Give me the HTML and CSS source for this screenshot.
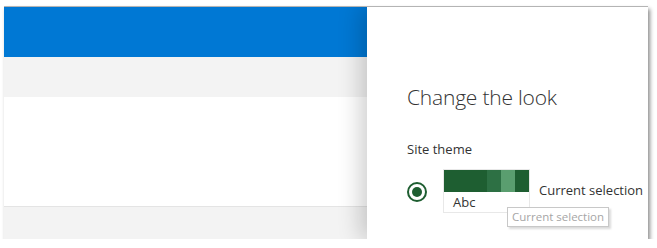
FILE: index.html
```html
<!DOCTYPE html>
<html lang="en">
<head>
    <meta charset="UTF-8">
    <title>Change the look</title>
    <link rel="stylesheet" href="styles.css">
</head>
<body>
    <div class="frame">
        <div class="site">
            <div class="suite-bar"></div>
            <div class="command-bar"></div>
            <div class="content"></div>
            <div class="footer"></div>
        </div>
        <div class="panel">
            <h1 class="panel-title">Change the look</h1>
            <div class="section-label">Site theme</div>
            <div class="theme-row">
                <span class="radio"><span class="radio-dot"></span></span>
                <div class="theme-card">
                    <div class="swatch">
                        <span class="c1"></span>
                        <span class="c2"></span>
                        <span class="c3"></span>
                        <span class="c4"></span>
                    </div>
                    <div class="sample">Abc</div>
                </div>
                <span class="theme-name">Current selection</span>
                <span class="tooltip">Current selection</span>
            </div>
        </div>
    </div>
</body>
</html>
```

FILE: styles.css
```css
body {
    margin: 0;
    background-color: #fff;
    font-family: "Open Sans", "Noto Sans", sans-serif;
    color: #333;
}
.frame {
    position: relative;
    width: 644px;
    height: 232px;
    margin: 6px 0 0 4px;
    border-top: 1px solid #b4b4b4;
    box-shadow: 2px 3px 4px rgba(0, 0, 0, 0.45);
    overflow: hidden;
}
.site {
    display: flex;
    flex-direction: column;
    height: 100%;
}
.suite-bar {
    height: 50px;
    background-color: #0078d4;
}
.command-bar {
    height: 40px;
    background-color: #f3f3f3;
}
.content {
    flex: 1;
    background-color: #fff;
    border-bottom: 1px solid #e4e4e4;
}
.footer {
    height: 32px;
    background-color: #f3f3f3;
}
.panel {
    position: absolute;
    top: 0;
    right: 0;
    bottom: 0;
    width: 281px;
    padding: 0 0 0 40px;
    box-sizing: border-box;
    background-color: #fff;
    box-shadow: -6px 0 22px rgba(0, 0, 0, 0.2);
}
.panel-title {
    margin: 76px 0 0;
    font-size: 21px;
    font-weight: 300;
    color: #333;
    letter-spacing: -0.2px;
}
.section-label {
    margin-top: 29px;
    font-size: 13px;
}
.theme-row {
    position: relative;
    display: flex;
    align-items: flex-start;
    margin-top: 11px;
}
.radio {
    display: flex;
    justify-content: center;
    align-items: center;
    width: 16px;
    height: 16px;
    margin-top: 13px;
    border: 2px solid #1e5e31;
    border-radius: 50%;
}
.radio-dot {
    width: 10px;
    height: 10px;
    border-radius: 50%;
    background-color: #1e5e31;
}
.theme-card {
    width: 85px;
    margin-left: 16px;
    border: 1px solid #e8e8e8;
}
.swatch {
    display: flex;
    height: 22px;
}
.swatch span {
    height: 100%;
}
.c1 { width: 43px; background-color: #1e5e31; }
.c2 { width: 14px; background-color: #2d7044; }
.c3 { width: 14px; background-color: #5a9e6f; }
.c4 { width: 14px; background-color: #1e5e31; }
.sample {
    padding: 1px 0 0 9px;
    height: 19px;
    font-size: 13px;
}
.theme-name {
    margin: 12px 0 0 9px;
    font-size: 13px;
    white-space: nowrap;
}
.tooltip {
    position: absolute;
    left: 100px;
    top: 38px;
    padding: 1px 4px 2px;
    font-size: 11.5px;
    color: #a6a6a6;
    background-color: #fff;
    border: 1px solid #c8c8c8;
    box-shadow: 2px 2px 2px rgba(0, 0, 0, 0.15);
    white-space: nowrap;
}
```
